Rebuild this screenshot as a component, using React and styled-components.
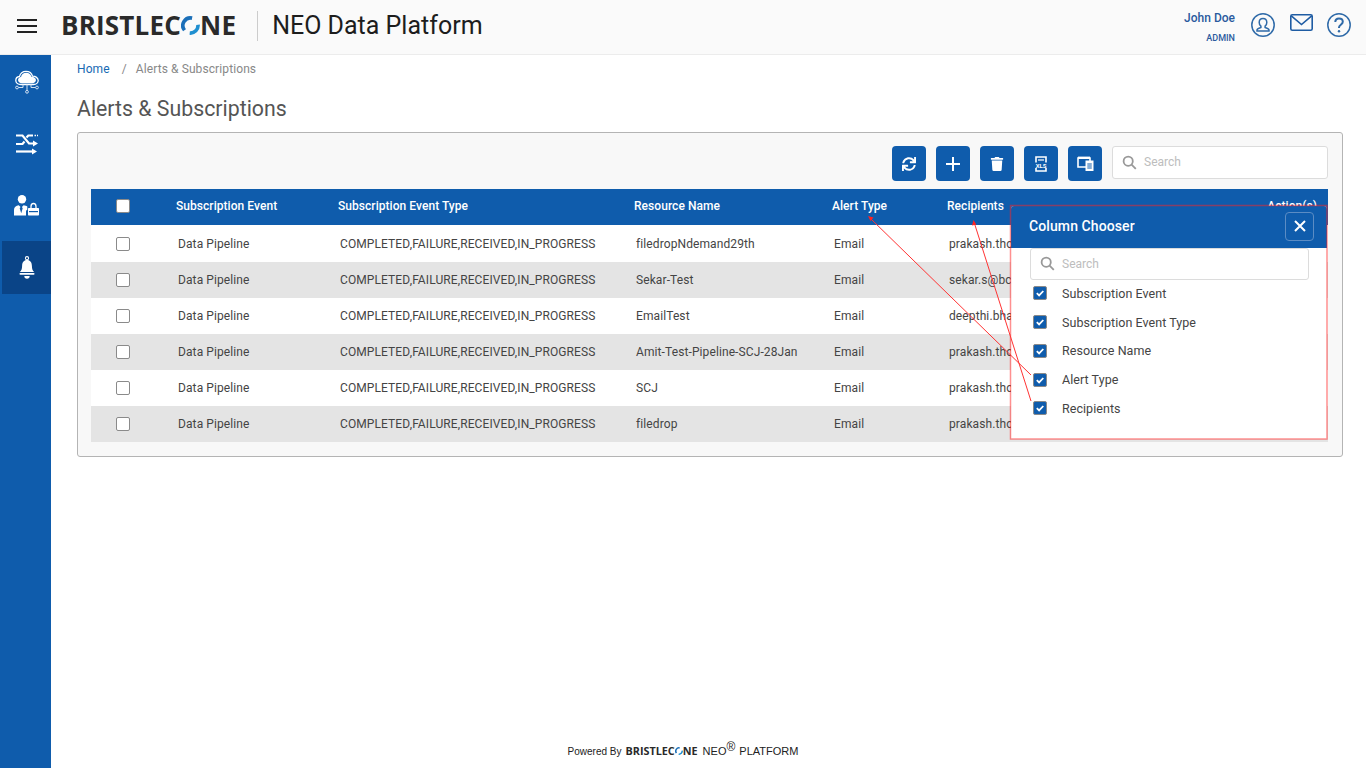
import React from 'react';
import styled, { createGlobalStyle } from 'styled-components';
import { FaSync, FaTrash } from 'react-icons/fa';

const BLUE = '#0f5cac';

const GlobalStyle = createGlobalStyle`
  * { box-sizing: border-box; }
  html, body { margin: 0; padding: 0; background: #fff; }
  body { font-family: Roboto, "Liberation Sans", sans-serif; overflow: hidden; }
`;

const Page = styled.div`
  position: relative;
  width: 1366px;
  height: 768px;
  display: flex;
  flex-direction: column;
  overflow: hidden;
`;

const Header = styled.header`
  height: 55px;
  flex: none;
  display: flex;
  align-items: center;
  padding: 0 14px 3px 17px;
  background: #fafafa;
  border-bottom: 1px solid #ececec;
`;

const Burger = styled.div`
  width: 20px;
  height: 14px;
  margin-right: 24px;
  display: flex;
  flex-direction: column;
  justify-content: space-between;
  span { display: block; height: 2px; background: #222; }
`;

const Logo = styled.div`
  display: flex;
  align-items: center;
  font-family: "Open Sans", "Liberation Sans", sans-serif;
  font-weight: 700;
  font-size: ${p => p.$size}px;
  line-height: 1;
  color: #2a2a2a;
  letter-spacing: ${p => p.$spacing}px;
  margin-bottom: ${p => p.$lift || 0}px;
  svg { display: block; margin: 0 ${p => p.$ringGap}px; }
`;

const Product = styled.div`
  margin-left: 21px;
  padding-left: 14px;
  height: 30px;
  border-left: 1px solid #ccc;
  font-size: 25px;
  line-height: 30px;
  color: #1d1d1d;
`;

const UserArea = styled.div`
  margin-left: auto;
  margin-bottom: 2px;
  display: flex;
  align-items: center;
`;

const UserName = styled.div`
  text-align: right;
  margin-right: 15px;
  padding-top: 5px;
  color: #2a5a9e;
  b { display: block; font-size: 12px; font-weight: 500; line-height: 16px; }
  small { display: block; margin-top: 7px; font-size: 9px; font-weight: 500; line-height: 11px; }
`;

const HeaderIcon = styled.svg`
  display: block;
  margin-left: ${p => p.$gap || 0}px;
  margin-bottom: ${p => p.$lift || 0}px;
`;

const Body = styled.div`
  flex: 1;
  display: flex;
  min-height: 0;
`;

const Sidebar = styled.nav`
  width: 51px;
  flex: none;
  background: ${BLUE};
  display: flex;
  flex-direction: column;
  align-items: flex-end;
  gap: 9px;
`;

const NavItem = styled.div`
  width: 49px;
  height: 53px;
  flex: none;
  display: flex;
  align-items: center;
  justify-content: center;
  background: ${p => (p.$active ? '#0a4487' : 'transparent')};
`;

const Main = styled.main`
  flex: 1;
  min-width: 0;
  display: flex;
  flex-direction: column;
  padding: 0 23px 0 26px;
`;

const Crumbs = styled.div`
  height: 28px;
  display: flex;
  align-items: center;
  font-size: 12px;
  letter-spacing: 0.1px;
  color: #888;
  a { color: #1769b3; text-decoration: none; }
  i { font-style: normal; margin: 0 9px 0 12px; }
`;

const Title = styled.h1`
  margin: 12px 0 9px;
  font-size: 21.3px;
  line-height: 28px;
  font-weight: 400;
  color: #555;
`;

const Panel = styled.section`
  position: relative;
  height: 325px;
  padding: 13px 14px 0 13px;
  background: #f8f8f8;
  border: 1px solid #b4b4b4;
  border-radius: 3px;
`;

const Toolbar = styled.div`
  display: flex;
  justify-content: flex-end;
  gap: 10px;
  height: 43px;
`;

const ToolButton = styled.button`
  width: 34px;
  height: 35px;
  padding: 0;
  border: 0;
  border-radius: 4px;
  background: ${BLUE};
  color: #fff;
  display: flex;
  align-items: center;
  justify-content: center;
`;

const SearchBox = styled.div`
  width: ${p => p.$width}px;
  height: ${p => p.$height}px;
  display: flex;
  align-items: center;
  gap: 7px;
  padding: 0 0 1px 9px;
  background: #fff;
  border: 1px solid #dcdcdc;
  border-radius: 3px;
  font-size: 12px;
  color: #bdbdbd;
  svg { display: block; }
`;

const Row = styled.div`
  display: grid;
  grid-template-columns: 85px 162px 296px 198px 115px 1fr auto;
  align-items: center;
  height: ${p => p.$h}px;
  padding-top: ${p => (p.$h === 37 ? 1 : 0)}px;
  background: ${p => p.$bg};
  font-size: 12px;
  letter-spacing: 0.1px;
`;

const HeadCell = styled.div`
  color: #fff;
  font-weight: 500;
  letter-spacing: 0.05px;
  padding-bottom: 2px;
  white-space: nowrap;
  padding-right: ${p => (p.$end ? 11 : 0)}px;
`;

const Cell = styled.div`
  color: #444;
  padding-left: 2px;
  padding-bottom: 1px;
  white-space: nowrap;
  overflow: hidden;
`;

const CheckCell = styled.div`
  padding-left: 25px;
  padding-bottom: ${p => (p.$head ? 2 : 0)}px;
  display: flex;
`;

const Check = styled.span`
  width: 14px;
  height: 14px;
  display: flex;
  align-items: center;
  justify-content: center;
  border-radius: 2px;
  border: 1px solid #8a8a8a;
  background: ${p => (p.$on ? BLUE : '#fff')};
`;

const Chooser = styled.aside`
  position: absolute;
  left: 933px;
  top: 73px;
  width: 316px;
  height: 233px;
  background: #fff;
  border-radius: 3px 3px 0 0;
`;

const ChooserHead = styled.div`
  height: 42px;
  display: flex;
  align-items: center;
  justify-content: space-between;
  padding: 0 13px 2px 18px;
  background: ${BLUE};
  border-radius: 3px 3px 0 0;
  color: #fff;
  font-size: 14px;
  font-weight: 500;
  letter-spacing: 0.1px;
`;

const CloseButton = styled.div`
  width: 29px;
  height: 29px;
  display: flex;
  align-items: center;
  justify-content: center;
  border: 1px solid #5b8cc4;
  border-radius: 4px;
`;

const ChooserBody = styled.div`
  padding: 0 19px;
`;

const ChooserList = styled.div`
  padding-left: 3px;
  margin-top: -1px;
`;

const ChooserItem = styled.label`
  height: 28.75px;
  display: flex;
  align-items: center;
  gap: 15px;
  font-size: 12.5px;
  letter-spacing: 0.05px;
  color: #444;
`;

const Annotations = styled.svg`
  position: absolute;
  left: 0;
  top: 0;
  pointer-events: none;
`;

const Footer = styled.footer`
  margin-top: auto;
  height: 34px;
  padding-right: 51px;
  margin-left: -26px;
  margin-right: -23px;
  display: flex;
  justify-content: center;
  align-items: center;
  font-family: "Liberation Sans", Arial, sans-serif;
  font-size: 11px;
  color: #222;
  small { font-size: 10px; margin-right: 4px; }
  > div { margin-right: 2px; }
  sup { font-size: 12px; line-height: 12px; margin: 0 4px 9px 0; }
`;

const rows = [
  ['filedropNdemand29th', 'prakash.thomas@bcone.com'],
  ['Sekar-Test', 'sekar.s@bcone.com'],
  ['EmailTest', 'deepthi.bhat@bcone.com'],
  ['Amit-Test-Pipeline-SCJ-28Jan', 'prakash.thomas@bcone.com'],
  ['SCJ', 'prakash.thomas@bcone.com'],
  ['filedrop', 'prakash.thomas@bcone.com'],
];

const columns = ['Subscription Event', 'Subscription Event Type', 'Resource Name', 'Alert Type', 'Recipients'];

// the O of the logo, two blue swooshes
const Ring = ({ size }) => (
  <svg width={size} height={size} viewBox="0 0 24 24" fill="none">
    <path d="M14 2.700A9.600 9.600 0 0 0 4.400 18" stroke="#1b6fb8" strokeWidth="4.600" />
    <path d="M21.500 11A9.600 9.600 0 0 1 11 21.500" stroke="#1f8fd0" strokeWidth="4.600" />
  </svg>
);

const SearchIcon = () => (
  <svg width="15" height="15" viewBox="0 0 15 15" fill="none" stroke="#999" strokeWidth="1.800">
    <circle cx="6.200" cy="6.200" r="4.600" />
    <path d="M9.600 9.600l4.200 4.200" />
  </svg>
);

const Tick = () => (
  <svg width="10" height="10" viewBox="0 0 10 10" fill="none" stroke="#fff" strokeWidth="1.800">
    <path d="M1.800 5.200l2.300 2.200 4.200-4.400" />
  </svg>
);

const cloudPath = 'M7 14.500c-3.400 0-5.200-1.900-5.200-4.100 0-2.100 1.600-3.700 3.700-3.900C6.300 3.300 9 1.400 12 1.400c3.200 0 5.800 2 6.500 4.800 3.100-.1 5.700 1.800 5.700 4.300 0 2.300-2 4-4.700 4z';

const CloudIcon = () => (
  <svg width="26" height="24" viewBox="0 0 26 24" fill="none" stroke="#fff">
    <path d={cloudPath} strokeWidth="1.300" />
    <path d={cloudPath} fill="#fff" stroke="none" transform="translate(2.600 1.700) scale(.8)" />
    <path d="M13 14.500v6M9 14.500v3H4.500M17 14.500v3h4.500" stroke="#cfdff2" strokeWidth="1" />
    <circle cx="3" cy="17.500" r="1.400" stroke="#cfdff2" strokeWidth="1" />
    <circle cx="23" cy="17.500" r="1.400" stroke="#cfdff2" strokeWidth="1" />
    <circle cx="13" cy="21.800" r="1.400" stroke="#cfdff2" strokeWidth="1" />
  </svg>
);

const ShuffleIcon = () => (
  <svg width="24" height="22" viewBox="0 0 24 22" fill="none" stroke="#fff" strokeWidth="2.200">
    <path d="M1 2.500h6.500l6.500 8h5" />
    <path d="M1 11h6.500l2-2.500M11.500 4.500l1.800-2h4.700" />
    <path d="M1 18.500h16" />
    <path d="M18 7.500l5 3-5 3zM17 15.500l5 3-5 3z" fill="#fff" stroke="none" />
    <path d="M19.500 2.500h1.500M22 2.500h1" strokeWidth="1.600" />
  </svg>
);

const AdminIcon = () => (
  <svg width="25" height="21" viewBox="0 0 25 21" fill="#fff">
    <circle cx="8" cy="4.200" r="4.200" />
    <path d="M0 20.500v-5.500c0-3 2-4.500 4.800-4.800L6.500 12l-.8 1.200 1.500 5 1.500-5-.8-1.200 1.700-1.800c1.500.1 2.800.6 3.700 1.400v3.200c-.9.400-1.300 1.100-1.300 2v3.700z" />
    <path d="M17 13v-1.500c0-1.800 1-3 2.500-3s2.500 1.200 2.500 3V13" fill="none" stroke="#fff" strokeWidth="1.300" />
    <path d="M15 13h9c.6 0 1 .4 1 1v5.500c0 .6-.4 1-1 1h-9c-.6 0-1-.4-1-1V14c0-.6.4-1 1-1z" />
    <rect x="15" y="16" width="9" height="1.200" fill={BLUE} />
  </svg>
);

const BellIcon = () => (
  <svg width="16" height="24" viewBox="0 0 18 27" fill="#fff">
    <circle cx="9" cy="2.500" r="1.800" fill="none" stroke="#fff" strokeWidth="1.200" />
    <path d="M9 4.500c3.600 0 5.500 3 5.500 6.500 0 4 1 5.800 2.500 7H1c1.500-1.200 2.500-3 2.500-7C3.500 7.500 5.400 4.500 9 4.500z" />
    <rect x="0.500" y="19" width="17" height="2.200" rx="1.100" />
    <path d="M6 22.500h6A3 3 0 0 1 6 22.500z" />
  </svg>
);

const XlsIcon = () => (
  <svg width="16" height="16" viewBox="0 0 16 16" fill="none">
    <path d="M3 1h10v14H3z" stroke="#fff" strokeWidth="1.600" />
    <path d="M5 4h6" stroke="#fff" strokeWidth="1.200" />
    <rect x="0.500" y="6.500" width="15" height="5.500" fill={BLUE} />
    <text x="8" y="11.600" textAnchor="middle" fontSize="6" fontWeight="700" fontFamily="Roboto, sans-serif" fill="#fff">XLS</text>
  </svg>
);

const ColumnsIcon = () => (
  <svg width="17" height="15" viewBox="0 0 17 15" fill="none">
    <path d="M1 2h12v9H1z" stroke="#fff" strokeWidth="1.600" />
    <path d="M1 1.800h12" stroke="#fff" strokeWidth="2.400" />
    <path d="M8.500 4.500h8V15h-8z" fill="#fff" />
    <path d="M10.300 8h4.500M10.300 10h4.500M10.300 12h4.500" stroke={BLUE} strokeWidth="1" />
  </svg>
);

const App = () => {
  return (
    <Page>
      <GlobalStyle />
      <Header>
        <Burger><span /><span /><span /></Burger>
        <Logo $size={26} $spacing={0.2} $ringGap={0} $lift={1}>
          BRISTLEC<Ring size={19} />NE
        </Logo>
        <Product>NEO Data Platform</Product>
        <UserArea>
          <UserName>
            <b>John Doe</b>
            <small>ADMIN</small>
          </UserName>
          <HeaderIcon width="26" height="26" viewBox="0 0 26 26" fill="none" stroke="#2f6aa8" strokeWidth="1.500">
            <circle cx="13" cy="13" r="11.200" />
            <path d="M13 6.500c2.300 0 3.800 1.800 3.800 4 0 1.700-.8 3-1.700 3.700v1.300c2 .5 3.900 1.300 3.900 2.600v.9H7v-.9c0-1.300 1.900-2.100 3.900-2.600v-1.300c-.9-.7-1.700-2-1.700-3.700 0-2.200 1.500-4 3.800-4z" />
          </HeaderIcon>
          <HeaderIcon $gap={14} $lift={4} width="23" height="17" viewBox="0 0 23 17" fill="none" stroke="#1f5ca3" strokeWidth="1.600">
            <rect x="0.800" y="0.800" width="21.400" height="15.400" rx="1.500" />
            <path d="M1.300 1.800l10.200 8.700 10.200-8.700" />
          </HeaderIcon>
          <HeaderIcon $gap={13} width="26" height="26" viewBox="0 0 26 26" fill="none" stroke="#2f6aa8" strokeWidth="1.500">
            <circle cx="13" cy="13" r="11.200" />
            <path d="M9.300 10c0-2.200 1.600-3.500 3.700-3.500s3.800 1.300 3.800 3.300c0 3-3.800 3-3.800 5.700v.5" strokeWidth="2" />
            <circle cx="13" cy="19.300" r="1.200" fill="#2f6aa8" stroke="none" />
          </HeaderIcon>
        </UserArea>
      </Header>
      <Body>
        <Sidebar>
          <NavItem><CloudIcon /></NavItem>
          <NavItem><ShuffleIcon /></NavItem>
          <NavItem><AdminIcon /></NavItem>
          <NavItem $active><BellIcon /></NavItem>
        </Sidebar>
        <Main>
          <Crumbs>
            <a href="#home">Home</a>
            <i>/</i>
            Alerts &amp; Subscriptions
          </Crumbs>
          <Title>Alerts &amp; Subscriptions</Title>
          <Panel>
            <Toolbar>
              <ToolButton><FaSync size={14} /></ToolButton>
              <ToolButton>
                <svg width="16" height="16" viewBox="0 0 16 16" stroke="#fff" strokeWidth="2"><path d="M8 1v14M1 8h14" /></svg>
              </ToolButton>
              <ToolButton><FaTrash size={14} /></ToolButton>
              <ToolButton><XlsIcon /></ToolButton>
              <ToolButton><ColumnsIcon /></ToolButton>
              <SearchBox $width={216} $height={33}>
                <SearchIcon />
                Search
              </SearchBox>
            </Toolbar>
            <Row $h={36} $bg={BLUE}>
              <CheckCell $head><Check /></CheckCell>
              {columns.map(c => <HeadCell key={c}>{c}</HeadCell>)}
              <HeadCell $end>Action(s)</HeadCell>
            </Row>
            {rows.map(([name, mail], i) => (
              <Row key={name} $h={i === 0 ? 37 : 36} $bg={i % 2 ? '#e4e4e4' : '#fff'}>
                <CheckCell><Check /></CheckCell>
                <Cell>Data Pipeline</Cell>
                <Cell>COMPLETED,FAILURE,RECEIVED,IN_PROGRESS</Cell>
                <Cell>{name}</Cell>
                <Cell>Email</Cell>
                <Cell>{mail}</Cell>
              </Row>
            ))}
            <Chooser>
              <ChooserHead>
                Column Chooser
                <CloseButton>
                  <svg width="12" height="12" viewBox="0 0 12 12" stroke="#fff" strokeWidth="2"><path d="M1 1l10 10M11 1L1 11" /></svg>
                </CloseButton>
              </ChooserHead>
              <ChooserBody>
                <SearchBox $width={279} $height={32}>
                  <SearchIcon />
                  Search
                </SearchBox>
                <ChooserList>
                  {columns.map(c => (
                    <ChooserItem key={c}>
                      <Check $on><Tick /></Check>
                      {c}
                    </ChooserItem>
                  ))}
                </ChooserList>
              </ChooserBody>
            </Chooser>
          </Panel>
          <Footer>
            <small>Powered By</small>
            <Logo $size={10.800} $spacing={0} $ringGap={0}>
              BRISTLEC<Ring size={8} />NE
            </Logo>
            &nbsp;NEO<sup>®</sup>PLATFORM
          </Footer>
        </Main>
      </Body>
      <Annotations width="1366" height="768" viewBox="0 0 1366 768" fill="none">
        <rect x="1010.500" y="205.500" width="316.500" height="233.500" stroke="#f22" strokeOpacity="0.5" strokeWidth="1.500" />
        <path d="M1031 375L870 218M1031 401L974 222" stroke="#f33" strokeWidth="1" />
        <path d="M868 216l5.500 1.500-3 3.500zM973.500 220l2.800 4.500-4.300 1z" fill="#f22" />
      </Annotations>
    </Page>
  );
};

export default App;
